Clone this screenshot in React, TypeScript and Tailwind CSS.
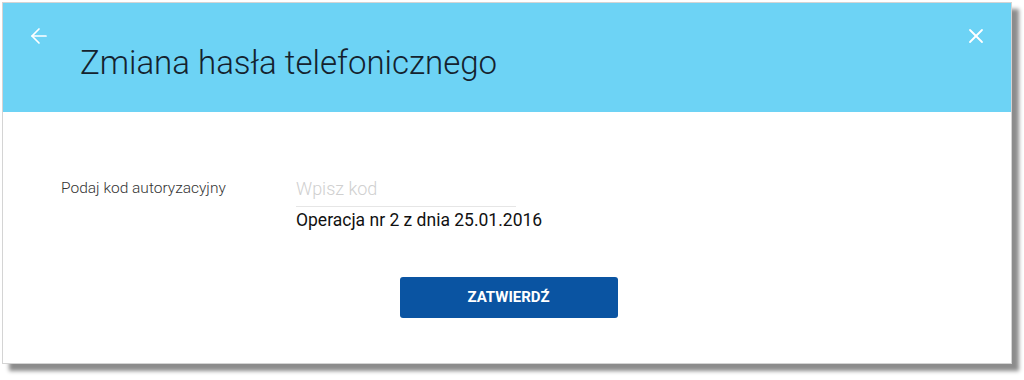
import React from 'react';
import { ArrowLeft, X } from 'lucide-react';

const App: React.FC = () => {
  return (
    <div className="w-[1024px] h-[380px] bg-white pl-[2px] pt-[2px]" style={{ fontFamily: 'Roboto, "Liberation Sans", sans-serif' }}>
      <div className="w-[1010px] h-[362px] border border-[#d4d4d4] bg-white shadow-[7px_7px_4px_rgba(0,0,0,0.45)] flex flex-col">
        {/* header */}
        <div className="h-[109px] bg-[#6dd3f5] flex items-start px-[24px] pt-[21px]">
          <button className="text-white">
            <ArrowLeft size={24} strokeWidth={1.7} />
          </button>
          <h1 className="ml-[29px] mt-[19px] text-[33px] font-light text-[#14222e] leading-[40px]">
            Zmiana hasła telefonicznego
          </h1>
          <button className="ml-auto mr-[-1px] text-white">
            <X size={24} strokeWidth={1.8} />
          </button>
        </div>

        {/* body */}
        <div className="flex flex-col pt-[64px]">
          <div className="flex items-start">
            <label className="ml-[58px] w-[235px] text-[15.5px] font-light text-[#333] leading-[22px] mt-[1px]">
              Podaj kod autoryzacyjny
            </label>
            <div className="flex flex-col w-[220px]">
              <input
                placeholder="Wpisz kod"
                className="h-[31px] border-b border-[#e6e6e6] text-[18px] font-light text-[#333] placeholder:text-[#d0d0d0] outline-none pb-[5px]"
              />
              <span className="mt-[1px] text-[17.5px] text-[#111] leading-[24px] whitespace-nowrap">
                Operacja nr 2 z dnia 25.01.2016
              </span>
            </div>
          </div>
          <div className="flex justify-center mt-[45px] pl-[3px]">
            <button className="w-[218px] h-[41px] rounded-[3px] bg-[#0a54a2] text-white text-[15px] font-bold">
              ZATWIERDŹ
            </button>
          </div>
        </div>
      </div>
    </div>
  );
};

export default App;
